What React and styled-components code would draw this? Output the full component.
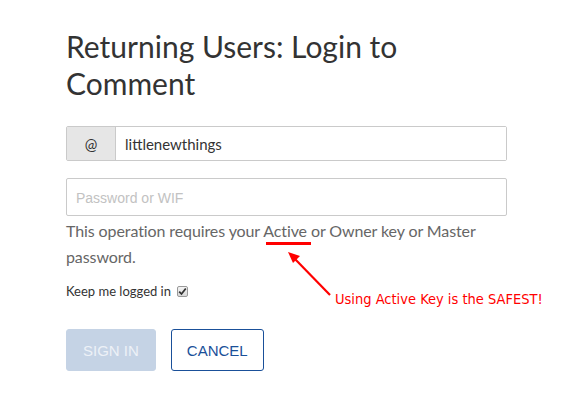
import React from "react";
import styled, { createGlobalStyle } from "styled-components";

const Global = createGlobalStyle`
  html, body { margin: 0; padding: 0; background: #fff; }
  body { font-family: "Lato", "Open Sans", sans-serif; color: #333; }
`;

const Page = styled.div`
  position: relative;
  width: 569px;
  height: 400px;
  overflow: hidden;
`;

const Form = styled.form`
  width: 441px;
  margin-left: 66px;
  padding-top: 28px;
  display: flex;
  flex-direction: column;
`;

const Title = styled.h3`
  margin: 0 0 24px;
  width: 360px;
  font-family: "Lato", sans-serif;
  font-weight: 400;
  font-size: 30px;
  line-height: 37px;
  color: #333;
`;

const InputGroup = styled.div`
  display: flex;
  height: 35px;
  border: 1px solid #cacaca;
  border-radius: 2px;
  box-sizing: border-box;
  margin-bottom: 17px;
`;

const Addon = styled.span`
  width: 48px;
  display: flex;
  align-items: center;
  justify-content: center;
  background: #e6e6e6;
  border-right: 1px solid #cacaca;
  font-size: 15px;
  color: #333;
`;

const GroupField = styled.input`
  flex: 1;
  min-width: 0;
  border: none;
  padding: 0 9px;
  font-family: "Lato", sans-serif;
  font-size: 15px;
  color: #333;
  outline: none;
  background: #fff;
`;

const PasswordField = styled.input`
  display: block;
  width: 100%;
  height: 38px;
  border: 1px solid #cacaca;
  border-radius: 2px;
  box-sizing: border-box;
  padding: 0 9px;
  font-family: "Lato", sans-serif;
  font-size: 15px;
  color: #333;
  outline: none;
  background: #fff;
  &::placeholder {
    color: #c2c2c2;
    font-family: "Liberation Sans", Arial, sans-serif;
    font-size: 14px;
  }
`;

const Help = styled.p`
  margin: 2px 0 13px;
  font-size: 16px;
  line-height: 26px;
  letter-spacing: -0.1px;
  color: #666;
`;

const KeepLabel = styled.label`
  display: flex;
  align-items: center;
  gap: 6px;
  font-size: 13px;
  color: #333;
  margin-bottom: 30px;
`;

const Check = styled.span`
  width: 11px;
  height: 11px;
  border: 1px solid #999;
  border-radius: 2px;
  background: linear-gradient(#f4f4f4, #d8d8d8);
  display: inline-flex;
  align-items: center;
  justify-content: center;
  box-sizing: border-box;
`;

const Buttons = styled.div`
  display: flex;
  gap: 15px;
`;

const Button = styled.button`
  height: 42px;
  padding: 0 ${(p) => (p.$primary ? "16px" : "15px")};
  border-radius: 3px;
  font-family: "Liberation Sans", Arial, sans-serif;
  font-size: 15px;
  text-transform: uppercase;
  box-sizing: border-box;
  border: 1px solid ${(p) => (p.$primary ? "#c5d3e5" : "#1a5099")};
  background: ${(p) => (p.$primary ? "#c5d3e5" : "#fff")};
  color: ${(p) => (p.$primary ? "#edf1f7" : "#1a5099")};
  cursor: pointer;
`;

const Annotation = styled.svg`
  position: absolute;
  left: 0;
  top: 0;
  pointer-events: none;
`;

const Note = styled.span`
  position: absolute;
  left: 335px;
  top: 291px;
  font-family: "DejaVu Sans Condensed", "DejaVu Sans", sans-serif;
  font-size: 14.5px;
  color: #f00;
  white-space: nowrap;
`;

export default function App() {
  return (
    <Page>
      <Global />
      <Form onSubmit={(e) => e.preventDefault()}>
        <Title>Returning Users: Login to Comment</Title>
        <InputGroup>
          <Addon>@</Addon>
          <GroupField defaultValue="littlenewthings" />
        </InputGroup>
        <PasswordField type="password" placeholder="Password or WIF" />
        <Help>
          This operation requires your Active or Owner key or Master password.
        </Help>
        <KeepLabel>
          Keep me logged in
          <Check>
            <svg width="9" height="9" viewBox="0 0 9 9">
              <path d="M1.2 4.6 L3.5 7 L7.8 1.5" fill="none" stroke="#333" strokeWidth="1.8" />
            </svg>
          </Check>
        </KeepLabel>
        <Buttons>
          <Button $primary type="submit">Sign in</Button>
          <Button type="button">Cancel</Button>
        </Buttons>
      </Form>
      <Annotation width="569" height="400" viewBox="0 0 569 400">
        <line x1="266" y1="243.5" x2="311" y2="243.5" stroke="#f00" strokeWidth="3" />
        <line x1="330" y1="295" x2="294" y2="258" stroke="#f00" strokeWidth="2.2" />
        <polygon points="288,252 300,256 293,263" fill="#f00" />
      </Annotation>
      <Note>Using Active Key is the SAFEST!</Note>
    </Page>
  );
}
